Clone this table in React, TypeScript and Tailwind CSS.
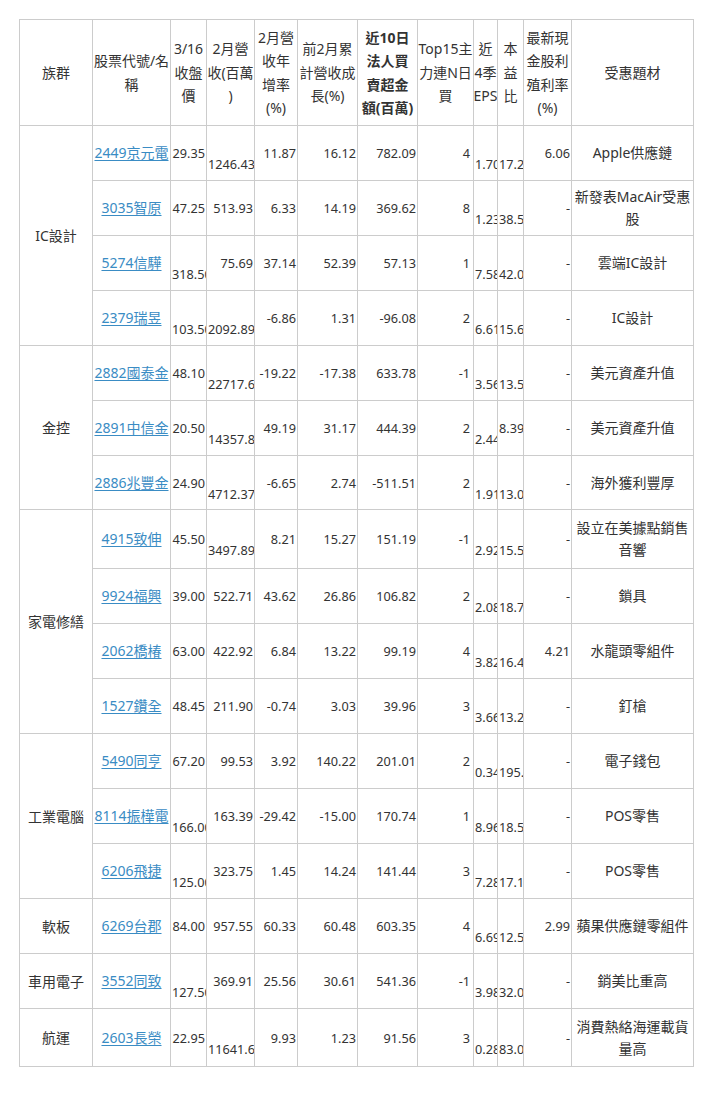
type Row = { name: string; vals: string; theme: string[] };
type Group = { name: string; span: string; rows: Row[] };

// "^" marks a value that drops to the second line (too wide for its column)
const GROUPS: Group[] = [
  {
    name: "IC設計",
    span: "row-span-4",
    rows: [
      { name: "2449京元電", vals: "29.35 ^1246.43 11.87 16.12 782.09 4 ^1.70 ^17.24 6.06", theme: ["Apple供應鏈"] },
      { name: "3035智原", vals: "47.25 513.93 6.33 14.19 369.62 8 ^1.23 ^38.52 -", theme: ["新發表MacAir受惠", "股"] },
      { name: "5274信驊", vals: "^318.50 75.69 37.14 52.39 57.13 1 ^7.58 ^42.02 -", theme: ["雲端IC設計"] },
      { name: "2379瑞昱", vals: "^103.50 ^2092.89 -6.86 1.31 -96.08 2 ^6.61 ^15.66 -", theme: ["IC設計"] },
    ],
  },
  {
    name: "金控",
    span: "row-span-3",
    rows: [
      { name: "2882國泰金", vals: "48.10 ^22717.61 -19.22 -17.38 633.78 -1 ^3.56 ^13.51 -", theme: ["美元資產升值"] },
      { name: "2891中信金", vals: "20.50 ^14357.84 49.19 31.17 444.39 2 ^2.44 8.39 -", theme: ["美元資產升值"] },
      { name: "2886兆豐金", vals: "24.90 ^4712.37 -6.65 2.74 -511.51 2 ^1.91 ^13.04 -", theme: ["海外獲利豐厚"] },
    ],
  },
  {
    name: "家電修繕",
    span: "row-span-4",
    rows: [
      { name: "4915致伸", vals: "45.50 ^3497.89 8.21 15.27 151.19 -1 ^2.92 ^15.58 -", theme: ["設立在美據點銷售", "音響"] },
      { name: "9924福興", vals: "39.00 522.71 43.62 26.86 106.82 2 ^2.08 ^18.75 -", theme: ["鎖具"] },
      { name: "2062橋椿", vals: "63.00 422.92 6.84 13.22 99.19 4 ^3.82 ^16.49 4.21", theme: ["水龍頭零組件"] },
      { name: "1527鑽全", vals: "48.45 211.90 -0.74 3.03 39.96 3 ^3.66 ^13.24 -", theme: ["釘槍"] },
    ],
  },
  {
    name: "工業電腦",
    span: "row-span-3",
    rows: [
      { name: "5490同亨", vals: "67.20 99.53 3.92 140.22 201.01 2 ^0.34 ^195.29 -", theme: ["電子錢包"] },
      { name: "8114振樺電", vals: "^166.00 163.39 -29.42 -15.00 170.74 1 ^8.96 ^18.53 -", theme: ["POS零售"] },
      { name: "6206飛捷", vals: "^125.00 323.75 1.45 14.24 141.44 3 ^7.28 ^17.17 -", theme: ["POS零售"] },
    ],
  },
  {
    name: "軟板",
    span: "row-span-1",
    rows: [{ name: "6269台郡", vals: "84.00 957.55 60.33 60.48 603.35 4 ^6.69 ^12.56 2.99", theme: ["蘋果供應鏈零組件"] }],
  },
  {
    name: "車用電子",
    span: "row-span-1",
    rows: [{ name: "3552同致", vals: "^127.50 369.91 25.56 30.61 541.36 -1 ^3.98 ^32.04 -", theme: ["銷美比重高"] }],
  },
  {
    name: "航運",
    span: "row-span-1",
    rows: [{ name: "2603長榮", vals: "22.95 ^11641.63 9.93 1.23 91.56 3 ^0.28 ^83.02 -", theme: ["消費熱絡海運載貨", "量高"] }],
  },
];

const HEADERS: { lines: string[]; bold?: boolean }[] = [
  { lines: ["族群"] },
  { lines: ["股票代號/名", "稱"] },
  { lines: ["3/16", "收盤", "價"] },
  { lines: ["2月營", "收(百萬", ")"] },
  { lines: ["2月營", "收年", "增率", "(%)"] },
  { lines: ["前2月累", "計營收成", "長(%)"] },
  { lines: ["近10日", "法人買", "賣超金", "額(百萬)"], bold: true },
  { lines: ["Top15主", "力連N日", "買"] },
  { lines: ["近", "4季", "EPS"] },
  { lines: ["本", "益", "比"] },
  { lines: ["最新現", "金股利", "殖利率", "(%)"] },
  { lines: ["受惠題材"] },
];

const cell = "bg-white overflow-hidden whitespace-nowrap text-[#333]";

function NumCell({ raw, col }: { raw: string; col: number }) {
  const low = raw.startsWith("^");
  const text = low ? raw.slice(1) : raw;
  const pad = col === 5 ? "pl-px pr-[3px]" : "px-px";
  return (
    <div className={`${cell} ${pad} flex items-center text-[12.7px] leading-[22px]`}>
      {low ? (
        <div className="w-full pt-[22px] text-left">{text}</div>
      ) : (
        <div className="w-full text-right">{text}</div>
      )}
    </div>
  );
}

export default function App() {
  return (
    <div className="min-h-screen bg-white pt-[19px] pl-[19px] font-['Noto_Sans','Noto_Sans_CJK_TC',sans-serif]">
      <div className="grid w-max grid-cols-[72px_77px_35px_47px_42px_59px_59px_55px_23px_25px_47px_121px] grid-rows-[105px_repeat(6,54px)_53px_58px_repeat(8,54px)_57px] gap-px border border-[#ccc] bg-[#ccc]">
        {HEADERS.map((h, i) => (
          <div
            key={i}
            className={`${cell} flex flex-col items-center justify-center text-center text-[14px] leading-[23.5px] ${h.bold ? "font-bold" : ""}`}
          >
            {h.lines.map((l, j) => (
              <div key={j}>{l}</div>
            ))}
          </div>
        ))}

        {GROUPS.map((g) =>
          g.rows.map((r, ri) => (
            <div key={r.name} className="contents">
              {ri === 0 && (
                <div className={`${cell} ${g.span} col-start-1 flex items-center justify-center text-[14px]`}>
                  {g.name}
                </div>
              )}
              <div className={`${cell} col-start-2 flex items-center justify-center text-[14px] leading-[22px]`}>
                <a href="#" className="text-[#3a8cc4] underline underline-offset-2">
                  {r.name}
                </a>
              </div>
              {r.vals.split(" ").map((v, ci) => (
                <NumCell key={ci} raw={v} col={ci} />
              ))}
              <div className={`${cell} flex flex-col items-center justify-center text-center text-[14px] leading-[22px]`}>
                {r.theme.map((t, ti) => (
                  <div key={ti}>{t}</div>
                ))}
              </div>
            </div>
          ))
        )}
      </div>
    </div>
  );
}
